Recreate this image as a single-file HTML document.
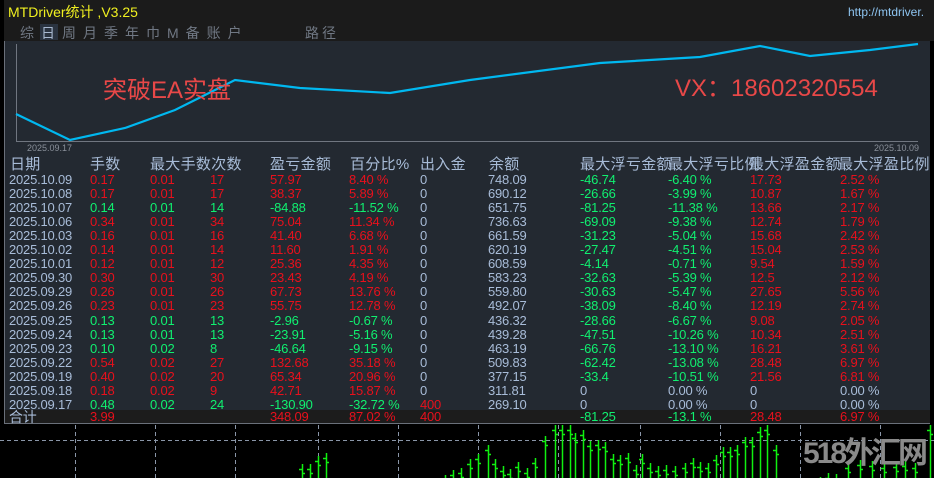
<!DOCTYPE html>
<html><head><meta charset="utf-8"><style>
*{margin:0;padding:0;box-sizing:border-box}
body{width:934px;height:478px;background:#000;position:relative;overflow:hidden;font-family:"Liberation Sans","Noto Sans CJK SC",sans-serif}
.a{position:absolute;white-space:nowrap}
.r{color:#e8101c}.g{color:#10f070}.b{color:#a8bcd8}
.row{position:absolute;left:0;width:934px;height:14px;font-size:13px;line-height:14px;white-space:nowrap;letter-spacing:-0.2px}
.row span{position:absolute;top:0;white-space:nowrap}
</style></head><body>
<div class="a" style="left:4px;top:0;width:930px;height:41px;background:#1b1b1b"></div>
<div class="a" style="left:8px;top:2px;font-size:14px;color:#f0f020">MTDriver统计 ,V3.25</div>
<div class="a" style="left:848px;top:5px;font-size:12px;color:#8ec4f0">http://mtdriver.</div>
<div class="a" style="left:40px;top:24px;width:18px;height:16px;background:#2a3340"></div>
<div class="a" style="left:20px;top:23px;font-size:14px;color:#707884;letter-spacing:7px">综<span style="color:#a8b8d0">日</span>周月季年巾M备账户</div>
<div class="a" style="left:305px;top:23px;font-size:14px;color:#707884;letter-spacing:3px">路径</div>
<div class="a" style="left:4px;top:41px;width:926px;height:383px;background:#232931;border-left:1px solid #6a707a;border-bottom:1px solid #6a707a"></div>
<div class="a" style="left:4px;top:410px;width:926px;height:14px;background:#1c1c1c;border-left:1px solid #6a707a;border-bottom:1px solid #6a707a"></div>
<svg class="a" style="left:0;top:0" width="934" height="160">
<path d="M16.5 44V141.5H918" stroke="#707680" fill="none"/>
<polyline points="16,114 70,140 125,128 175,110 235,80 300,88 390,93 470,80 600,63 700,57 760,46 810,56 870,50 918,44" stroke="#00b8f0" stroke-width="2.2" fill="none"/>
</svg>
<div class="a" style="left:27px;top:143px;font-size:9px;color:#8a909a">2025.09.17</div>
<div class="a" style="left:874px;top:143px;font-size:9px;color:#8a909a">2025.10.09</div>
<div class="a" style="left:103px;top:70px;font-size:24px;color:#e84848">突破EA实盘</div>
<div class="a" style="left:675px;top:68px;font-size:24px;color:#e84848">VX：18602320554</div>
<div class="row b" style="top:156px;font-size:15px;height:17px;line-height:17px;letter-spacing:0.3px"><span style="left:10px">日期</span><span style="left:90px">手数</span><span style="left:150px">最大手数次数</span><span style="left:270px">盈亏金额</span><span style="left:350px">百分比%</span><span style="left:420px">出入金</span><span style="left:489px">余额</span><span style="left:580px">最大浮亏金额</span><span style="left:668px">最大浮亏比例</span><span style="left:749px">最大浮盈金额</span><span style="left:838px">最大浮盈比例</span></div>
<div id="t"></div>
<script>
var d=[["2025.10.09","r","0.17","0.01","17","57.97","8.40 %","0","748.09","-46.74","-6.40 %","17.73","2.52 %"],
["2025.10.08","r","0.17","0.01","17","38.37","5.89 %","0","690.12","-26.66","-3.99 %","10.87","1.67 %"],
["2025.10.07","g","0.14","0.01","14","-84.88","-11.52 %","0","651.75","-81.25","-11.38 %","13.66","2.17 %"],
["2025.10.06","r","0.34","0.01","34","75.04","11.34 %","0","736.63","-69.09","-9.38 %","12.74","1.79 %"],
["2025.10.03","r","0.16","0.01","16","41.40","6.68 %","0","661.59","-31.23","-5.04 %","15.68","2.42 %"],
["2025.10.02","r","0.14","0.01","14","11.60","1.91 %","0","620.19","-27.47","-4.51 %","15.04","2.53 %"],
["2025.10.01","r","0.12","0.01","12","25.36","4.35 %","0","608.59","-4.14","-0.71 %","9.54","1.59 %"],
["2025.09.30","r","0.30","0.01","30","23.43","4.19 %","0","583.23","-32.63","-5.39 %","12.5","2.12 %"],
["2025.09.29","r","0.26","0.01","26","67.73","13.76 %","0","559.80","-30.63","-5.47 %","27.65","5.56 %"],
["2025.09.26","r","0.23","0.01","23","55.75","12.78 %","0","492.07","-38.09","-8.40 %","12.19","2.74 %"],
["2025.09.25","g","0.13","0.01","13","-2.96","-0.67 %","0","436.32","-28.66","-6.67 %","9.08","2.05 %"],
["2025.09.24","g","0.13","0.01","13","-23.91","-5.16 %","0","439.28","-47.51","-10.26 %","10.34","2.51 %"],
["2025.09.23","g","0.10","0.02","8","-46.64","-9.15 %","0","463.19","-66.76","-13.10 %","16.21","3.61 %"],
["2025.09.22","r","0.54","0.02","27","132.68","35.18 %","0","509.83","-62.42","-13.08 %","28.48","6.97 %"],
["2025.09.19","r","0.40","0.02","20","65.34","20.96 %","0","377.15","-33.4","-10.51 %","21.56","6.81 %"],
["2025.09.18","r","0.18","0.02","9","42.71","15.87 %","0","311.81","0","0.00 %","0","0.00 %"],
["2025.09.17","g","0.48","0.02","24","-130.90","-32.72 %","400","269.10","0","0.00 %","0","0.00 %"]];
var X=[9,90,150,210,270,349,420,488,580,668,750,840],h="";
d.forEach(function(r,i){var c=r[1];var cl=[ "b",c,c,c,c,c,r[7]=="400"?"r":"b","b",r[9]=="0"?"b":"g",r[10]=="0.00 %"?"b":"g",r[11]=="0"?"b":"r",r[12]=="0.00 %"?"b":"r"];
var v=[r[0],r[2],r[3],r[4],r[5],r[6],r[7],r[8],r[9],r[10],r[11],r[12]];
h+='<div class="row" style="top:'+(173+i*14.05)+'px">';for(var k=0;k<12;k++)h+='<span class="'+cl[k]+'" style="left:'+X[k]+'px">'+v[k]+'</span>';h+='</div>';});
h+='<div class="row" style="top:410px"><span class="b" style="left:9px;font-size:14px">合计</span><span class="r" style="left:90px">3.99</span><span class="r" style="left:270px">348.09</span><span class="r" style="left:349px">87.02 %</span><span class="r" style="left:420px">400</span><span class="g" style="left:580px">-81.25</span><span class="g" style="left:668px">-13.1 %</span><span class="r" style="left:750px">28.48</span><span class="r" style="left:840px">6.97 %</span></div>';
document.getElementById('t').innerHTML=h;
var s='<svg class="a" style="left:0;top:425px" width="934" height="53">';
[75,155,235,318,398,478,558,640,720,800,880].forEach(function(x){s+='<line x1="'+x+'.5" y1="0" x2="'+x+'.5" y2="53" stroke="#8a96a8" stroke-dasharray="4,3"/>';});
s+='<line x1="0" y1="15.5" x2="934" y2="15.5" stroke="#8a96a8" stroke-dasharray="4,3"/>';
var B=[[302,39],[310,39],[318,31],[326,28],[445,50],[453,45],[461,43],[470,34],[478,29],[488,20],[495,34],[503,41],[510,44],[518,37],[527,43],[535,33],[545,11],[555,0],[562,0],[570,0],[575,8],[583,5],[590,16],[598,15],[605,17],[613,29],[620,30],[628,28],[636,40],[642,29],[650,38],[658,41],[666,40],[675,41],[685,38],[693,33],[700,37],[708,38],[716,30],[723,22],[730,22],[737,20],[745,12],[752,12],[760,2],[767,0],[776,20],[820,52],[828,48],[836,49],[848,38],[860,35],[872,36],[884,38],[896,37],[905,36],[915,38],[930,0]];
B.forEach(function(b){s+='<path d="M'+(b[0]+.5)+' '+b[1]+'V53M'+(b[0]-3)+' '+(b[1]+5)+'.5h3M'+b[0]+' '+(b[1]+9)+'.5h3" stroke="#10f010" stroke-width="1.5" fill="none"/>';});
s+='</svg>';document.body.insertAdjacentHTML('beforeend',s);
</script>
<div class="a" style="left:803px;top:437px;font-size:30px;line-height:34px;font-weight:bold;color:#8a8a8a;letter-spacing:-3px">518外汇网</div>
</body></html>
